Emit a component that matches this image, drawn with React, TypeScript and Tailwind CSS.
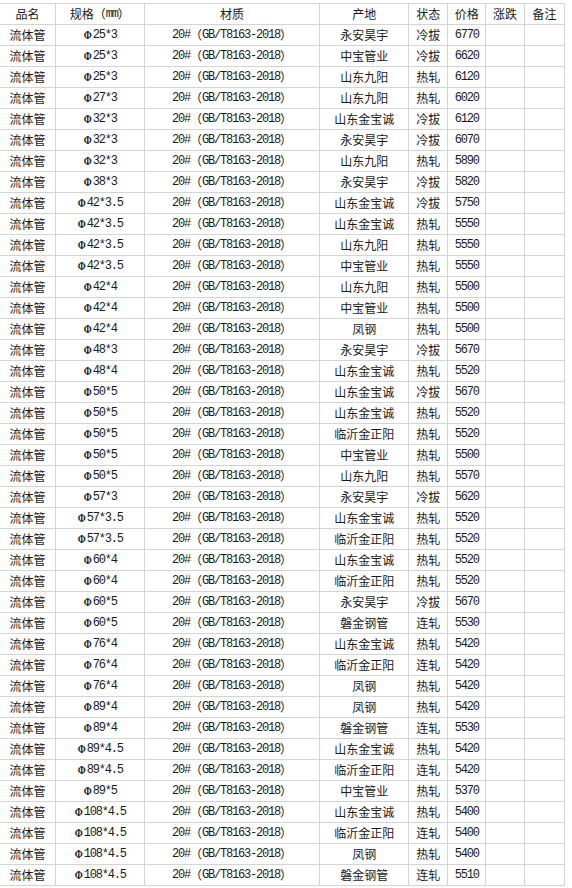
import React from "react";

type Row = [string, string, string, string];

const rows: Row[] = [
  ["25*3", "永安昊宇", "冷拔", "6770"],
  ["25*3", "中宝管业", "冷拔", "6620"],
  ["25*3", "山东九阳", "热轧", "6120"],
  ["27*3", "山东九阳", "热轧", "6020"],
  ["32*3", "山东金宝诚", "冷拔", "6120"],
  ["32*3", "永安昊宇", "冷拔", "6070"],
  ["32*3", "山东九阳", "热轧", "5890"],
  ["38*3", "永安昊宇", "冷拔", "5820"],
  ["42*3.5", "山东金宝诚", "冷拔", "5750"],
  ["42*3.5", "山东金宝诚", "热轧", "5550"],
  ["42*3.5", "山东九阳", "热轧", "5550"],
  ["42*3.5", "中宝管业", "热轧", "5550"],
  ["42*4", "山东九阳", "热轧", "5500"],
  ["42*4", "中宝管业", "热轧", "5500"],
  ["42*4", "凤钢", "热轧", "5500"],
  ["48*3", "永安昊宇", "冷拔", "5670"],
  ["48*4", "山东金宝诚", "热轧", "5520"],
  ["50*5", "山东金宝诚", "冷拔", "5670"],
  ["50*5", "山东金宝诚", "热轧", "5520"],
  ["50*5", "临沂金正阳", "热轧", "5520"],
  ["50*5", "中宝管业", "热轧", "5500"],
  ["50*5", "山东九阳", "热轧", "5570"],
  ["57*3", "永安昊宇", "冷拔", "5620"],
  ["57*3.5", "山东金宝诚", "热轧", "5520"],
  ["57*3.5", "临沂金正阳", "热轧", "5520"],
  ["60*4", "山东金宝诚", "热轧", "5520"],
  ["60*4", "临沂金正阳", "热轧", "5520"],
  ["60*5", "永安昊宇", "冷拔", "5670"],
  ["60*5", "磐金钢管", "连轧", "5530"],
  ["76*4", "山东金宝诚", "热轧", "5420"],
  ["76*4", "临沂金正阳", "连轧", "5420"],
  ["76*4", "凤钢", "热轧", "5420"],
  ["89*4", "凤钢", "热轧", "5420"],
  ["89*4", "磐金钢管", "连轧", "5530"],
  ["89*4.5", "山东金宝诚", "热轧", "5420"],
  ["89*4.5", "临沂金正阳", "连轧", "5420"],
  ["89*5", "中宝管业", "热轧", "5370"],
  ["108*4.5", "山东金宝诚", "热轧", "5400"],
  ["108*4.5", "临沂金正阳", "连轧", "5400"],
  ["108*4.5", "凤钢", "热轧", "5400"],
  ["108*4.5", "磐金钢管", "连轧", "5510"],
];

const cjk = "font-['Noto_Sans_CJK_SC','Noto_Sans',sans-serif] text-[12px]";
const mono = "font-['Liberation_Mono','Noto_Sans_CJK_SC',monospace] text-[12px] tracking-[-1.2px]";

const cell = "flex items-center justify-center border-r border-[#d4d4d4] h-full overflow-hidden whitespace-nowrap";

const widths = ["w-[56px]", "w-[89px]", "w-[176px]", "w-[89px]", "w-[39px]", "w-[38px]", "w-[39px]", "w-[40px]"];

function Spec({ v }: { v: string }) {
  return (
    <span className="flex items-center">
      <span className="inline-block font-['Liberation_Serif',serif] text-[12px] font-bold leading-none scale-x-[0.8] w-[7px] text-center mr-[3px]">Φ</span>
      <span className={mono}>{v}</span>
    </span>
  );
}

function Material() {
  return (
    <span className="flex items-center">
      <span className={mono}>20#</span>
      <span className={cjk}>（</span>
      <span className={mono}>GB/T8163-2018</span>
      <span className={cjk}>）</span>
    </span>
  );
}

export default function App() {
  const headers = ["品名", "规格", "材质", "产地", "状态", "价格", "涨跌", "备注"];
  return (
    <div className="w-[572px] h-[888px] bg-white text-[#1a1a1a] overflow-hidden">
      <div className="mt-[3px] w-[565px] border-t border-[#d4d4d4]">
        <div className="flex h-[21px] border-b border-[#d4d4d4]">
          {headers.map((h, i) => (
            <div key={i} className={`${cell} ${widths[i]}`}>
              {i === 1 ? (
                <span className="flex items-center">
                  <span className={cjk}>规格（</span>
                  <span className={mono}>mm</span>
                  <span className={cjk}>）</span>
                </span>
              ) : (
                <span className={cjk}>{h}</span>
              )}
            </div>
          ))}
        </div>
        {rows.map((r, idx) => (
          <div key={idx} className="flex h-[21px] border-b border-[#d4d4d4]">
            <div className={`${cell} ${widths[0]}`}>
              <span className={cjk}>流体管</span>
            </div>
            <div className={`${cell} ${widths[1]}`}>
              <Spec v={r[0]} />
            </div>
            <div className={`${cell} ${widths[2]}`}>
              <Material />
            </div>
            <div className={`${cell} ${widths[3]}`}>
              <span className={cjk}>{r[1]}</span>
            </div>
            <div className={`${cell} ${widths[4]}`}>
              <span className={cjk}>{r[2]}</span>
            </div>
            <div className={`${cell} ${widths[5]}`}>
              <span className={mono}>{r[3]}</span>
            </div>
            <div className={`${cell} ${widths[6]}`}></div>
            <div className={`${cell} ${widths[7]}`}></div>
          </div>
        ))}
      </div>
    </div>
  );
}
